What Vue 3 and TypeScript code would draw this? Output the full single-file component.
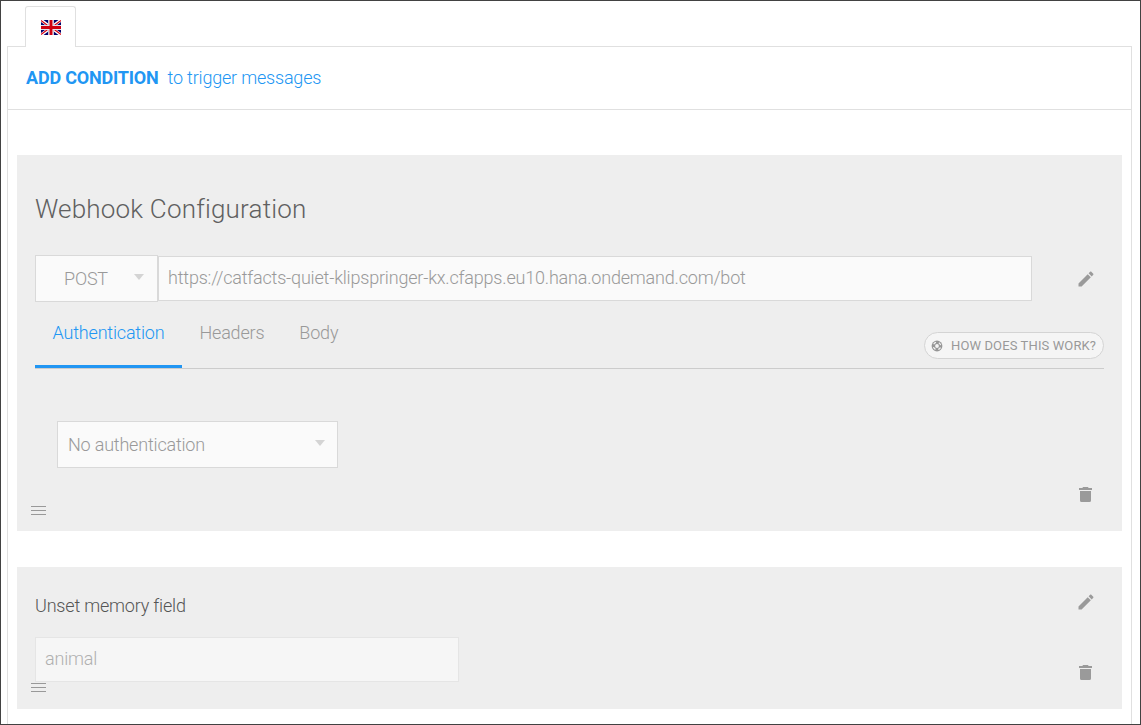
<script setup lang="ts">
import { ref } from 'vue'

const tabs = ['Authentication', 'Headers', 'Body']
const activeTab = ref('Authentication')
const method = ref('POST')
const url = ref('https://catfacts-quiet-klipspringer-kx.cfapps.eu10.hana.ondemand.com/bot')
const auth = ref('No authentication')
const memoryField = ref('animal')

const pencilPath =
  'M20.71 7.04c.39-.39.39-1.04 0-1.41l-2.34-2.34c-.37-.39-1.02-.39-1.41 0l-1.84 1.83 3.75 3.75M3 17.25V21h3.75L17.81 9.93l-3.75-3.75L3 17.25z'
const trashPath = 'M4 0h5l.6 1H13v2H0V1h3.4zM1 4h11v9.5q0 1.5-1.5 1.5h-8Q1 15 1 13.500z'
</script>

<template>
  <div class="frame">
    <nav class="languages">
      <div class="language">
        <svg class="flag" viewBox="0 0 20 15">
          <path fill="#00006b" d="M0 0h20v15H0z" />
          <path stroke="#fff" stroke-width="3" d="M0 0l20 15M20 0L0 15" />
          <path stroke="#d80010" stroke-width="1.1" d="M0 .5L8 6.500M20 .5L12 6.500M0 14.500L8 8.500M20 14.500L12 8.500" />
          <path fill="#c5c5dc" d="M7 0h6v15H7zM0 5h20v5H0z" />
          <path fill="#fff" d="M8 0h4v15H8zM0 5.500h20v4H0z" />
          <path fill="#cf0010" d="M8.500 0h3v15h-3zM0 6h20v3H0z" />
        </svg>
      </div>
    </nav>

    <main class="panel">
      <header class="condition">
        <strong>ADD CONDITION</strong><span>to trigger messages</span>
      </header>

      <section class="card webhook">
        <h1>Webhook Configuration</h1>
        <div class="request">
          <div class="select method">
            <span>{{ method }}</span><i class="caret"></i>
          </div>
          <div class="field url">{{ url }}</div>
          <svg class="pencil" viewBox="0 0 24 24"><path :d="pencilPath" /></svg>
        </div>
        <div class="tabs">
          <button
            v-for="tab in tabs"
            :key="tab"
            class="tab"
            :class="{ active: tab === activeTab }"
            @click="activeTab = tab"
          >{{ tab }}</button>
          <button class="help">
            <svg viewBox="0 0 12 12">
              <circle cx="6" cy="6" r="5.400" fill="#969696" />
              <circle cx="6" cy="6" r="3.700" fill="none" stroke="#f5f5f5" stroke-width="1.300" stroke-dasharray="2.900 2.912" stroke-dashoffset="-1.450" />
              <circle cx="6" cy="6" r="1.900" fill="#f5f5f5" />
            </svg>
            <span>HOW DOES THIS WORK?</span>
          </button>
        </div>
        <div class="select auth">
          <span>{{ auth }}</span><i class="caret"></i>
        </div>
        <footer class="tools">
          <i class="grip"></i>
          <svg class="trash" viewBox="0 0 13 15"><path :d="trashPath" /></svg>
        </footer>
      </section>

      <section class="card memory">
        <div class="memory-head">
          <h2>Unset memory field</h2>
          <svg class="pencil" viewBox="0 0 24 24"><path :d="pencilPath" /></svg>
        </div>
        <div class="field key">{{ memoryField }}</div>
        <footer class="tools">
          <i class="grip"></i>
          <svg class="trash" viewBox="0 0 13 15"><path :d="trashPath" /></svg>
        </footer>
      </section>
    </main>
  </div>
</template>

<style>
body {
  margin: 0;
  background: #fff;
}
</style>

<style scoped>
* {
  box-sizing: border-box;
}
.frame {
  height: 725px;
  padding: 5px 8px 0 6px;
  border: 1px solid #424242;
  overflow: hidden;
  display: flex;
  flex-direction: column;
  font: 300 18px/22px Roboto, sans-serif;
  letter-spacing: -0.195px;
  color: #999;
}
.languages {
  display: flex;
  padding-left: 18px;
  height: 41px;
  flex: none;
  margin-bottom: -1px;
  z-index: 1;
}
.language {
  width: 51px;
  height: 41px;
  padding: 13px 0 0 15px;
  border: 1px solid #e0e0e0;
  border-bottom: 0;
  border-radius: 3px 3px 0 0;
  background: #fff;
}
.flag {
  display: block;
  width: 20px;
  height: 15px;
}
.panel {
  flex: 1;
  width: 1125px;
  border: 1px solid #e0e0e0;
  border-bottom: 0;
}
.condition {
  height: 63px;
  padding: 20px 18px 0;
  border-bottom: 1px solid #e0e0e0;
  color: #2196f3;
  display: flex;
  gap: 9px;
}
.condition strong {
  font-weight: 700;
}
.card {
  width: 1105px;
  margin-left: 9px;
  padding: 0 18px;
  background: #eee;
}
.webhook {
  height: 376px;
  margin-top: 45px;
  padding-top: 36px;
}
h1 {
  margin: 0;
  height: 64px;
  font: 300 26px/36px Roboto, sans-serif;
  letter-spacing: 0.19px;
  color: #606060;
}
.request {
  display: flex;
  align-items: center;
  height: 47px;
}
.select {
  display: flex;
  align-items: center;
  justify-content: space-between;
  height: 47px;
  background: #fafafa;
  border: 1px solid #d9d9d9;
}
.method {
  width: 123px;
  padding: 0 13px 0 28px;
}
.caret {
  width: 0;
  height: 0;
  margin-bottom: 3px;
  border: 5.500px solid transparent;
  border-top: 6px solid #d4d4d4;
  border-bottom: 0;
}
.field {
  height: 45px;
  padding: 0 9px;
  line-height: 42px;
  border: 1px solid #d9d9d9;
  background: #fafafa;
  white-space: nowrap;
}
.url {
  width: 874px;
}
.pencil {
  width: 20px;
  height: 20px;
  fill: #9a9a9a;
}
.request .pencil {
  margin-left: 43.500px;
}
.tabs {
  display: flex;
  height: 67px;
  width: 1069px;
  border-bottom: 1px solid #ccc;
}
button {
  margin: 0;
  font: inherit;
  letter-spacing: inherit;
  color: inherit;
  background: none;
  border: 0;
}
.tab {
  padding: 0 17.500px 5px;
  height: 66px;
}
.tab.active {
  color: #2196f3;
  width: 147px;
  border-bottom: 3px solid #2196f3;
  padding-bottom: 2px;
}
.help {
  display: flex;
  align-items: center;
  gap: 8px;
  width: 180px;
  height: 27px;
  margin: 30px 0 0 auto;
  padding: 0 6px;
  border: 1px solid #d4d4d4;
  border-radius: 14px;
  background: #f5f5f5;
  font-size: 13px;
  font-weight: 400;
  letter-spacing: 0.12px;
  white-space: nowrap;
}
.help svg {
  width: 12px;
  height: 12px;
  flex: none;
}
.auth {
  width: 281px;
  margin: 52px 0 0 22px;
  padding: 0 12px 0 10px;
}
.tools {
  display: flex;
  justify-content: space-between;
  align-items: flex-start;
  margin-left: -4px;
  padding-right: 12px;
}
.webhook .tools {
  margin-top: 19px;
}
.grip {
  width: 15px;
  height: 9px;
  margin-top: 19px;
  border: 1px solid #999;
  border-width: 1px 0;
  background: linear-gradient(#999, #999) 0 3px / 15px 1px no-repeat;
}
.trash {
  width: 13px;
  height: 15px;
  fill: #9a9a9a;
}
.memory {
  height: 142px;
  margin-top: 36px;
  padding-top: 25px;
}
.memory-head {
  display: flex;
  justify-content: space-between;
  height: 45px;
  padding-right: 8.500px;
}
h2 {
  margin: 3px 0 0;
  font: inherit;
  color: #555;
}
.key {
  width: 424px;
  background: #f6f6f6;
  border-color: #e5e5e5;
  color: #b0b0b0;
}
.memory .tools {
  margin-top: -17px;
}
.memory .grip {
  margin-top: 18px;
}
</style>
